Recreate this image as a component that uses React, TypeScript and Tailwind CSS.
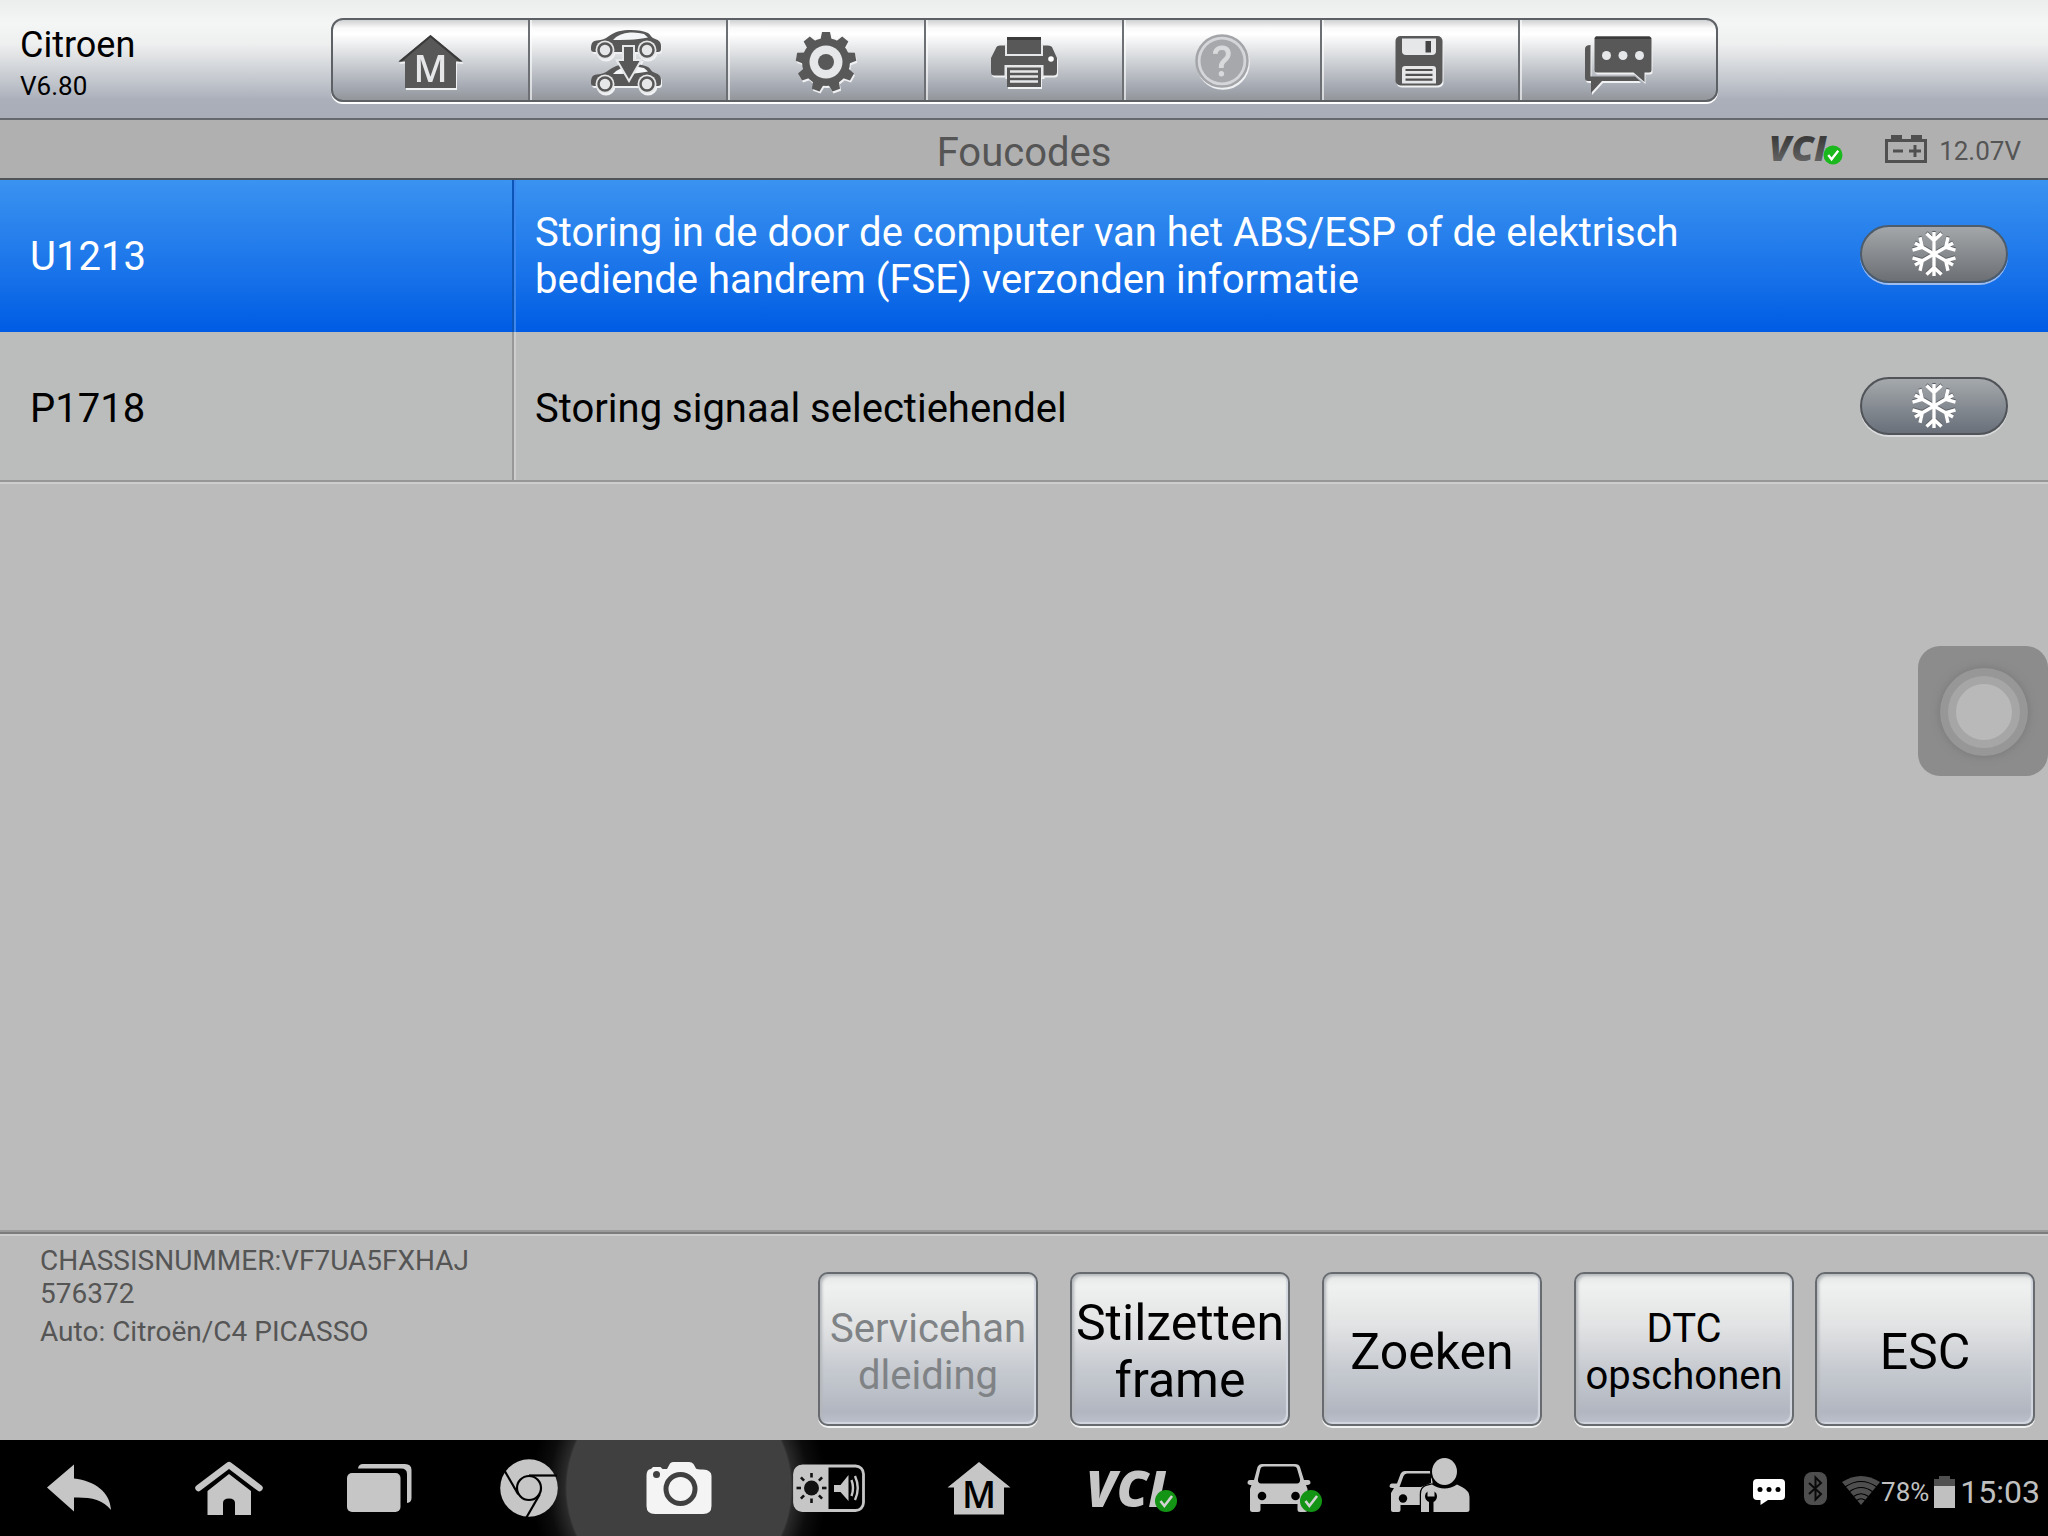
import React from 'react';
import clsx from 'clsx';

interface FaultCode {
  code: string;
  description: string;
  selected?: boolean;
}

interface IconButton {
  label: string;
  icon: React.ReactNode;
  disabled?: boolean;
}

interface FooterAction {
  label: string;
  large?: boolean;
  disabled?: boolean;
}

const faultCodes: FaultCode[] = [
  {
    code: 'U1213',
    description:
      'Storing in de door de computer van het ABS/ESP of de elektrisch bediende handrem (FSE) verzonden informatie',
    selected: true,
  },
  { code: 'P1718', description: 'Storing signaal selectiehendel' },
];

const actions: FooterAction[] = [
  { label: 'Servicehandleiding', disabled: true },
  { label: 'Stilzetten frame', large: true },
  { label: 'Zoeken', large: true },
  { label: 'DTC opschonen' },
];

const DARK = '#585858';
const LIGHT = '#e6e7e9';
const NAV = '#c6c6c6';

/* ---------- toolbar icons ---------- */

const ToolIcon: React.FC<{ children: React.ReactNode }> = ({ children }) => (
  <svg
    viewBox="0 0 80 76"
    className="h-[76px] w-20 shrink-0 drop-shadow-[1px_2px_0_#f0f1f3]"
    fill={DARK}
    aria-hidden="true"
  >
    {children}
  </svg>
);

const HomeMIcon = () => (
  <ToolIcon>
    <path d="M39.5 13 71.5 39.5H65V66H14V39.5H7.5Z" />
    <path d="M39.5 13 71.5 39.5H68L39.5 15.5 11 39.5H7.5Z" fill="#3a3a3a" />
    <text x="39.5" y="60" textAnchor="middle" fontSize="37" fontWeight="600" fill={LIGHT} className="font-['Open_Sans',sans-serif]">
      M
    </text>
  </ToolIcon>
);

const SideCar: React.FC<{ y: number }> = ({ y }) => (
  <g transform={`translate(0 ${y})`}>
    <path d="M3 27C3 22 4 19 9 18.5 14 18 17 17 21 14 27 9.500 34 8 43 8 50 8 56 9 60 11 63 13 63 15 65 16 70 18 73 19 73 24V27Q73 30 70 30H6Q3 30 3 27Z" />
    <path d="M25 18Q31 11 42 10.500 50 10 56 12L60 15.500Q50 18 25 18Z" fill="#f4f5f6" />
    {[17, 59].map((cx) => (
      <g key={cx}>
        <circle cx={cx} cy="28" r="9.500" fill={LIGHT} />
        <circle cx={cx} cy="28" r="6.500" fill={LIGHT} stroke={DARK} strokeWidth="2.500" />
      </g>
    ))}
  </g>
);

const CarSwapIcon = () => (
  <ToolIcon>
    <SideCar y={0} />
    <SideCar y={34} />
    <path
      d="M36 25H45V39H51.500L41 57 30.500 39H36Z"
      stroke={LIGHT}
      strokeWidth="4"
      paintOrder="stroke"
    />
  </ToolIcon>
);

const GearIcon = () => (
  <ToolIcon>
    <g transform="translate(40 40)">
      {Array.from({ length: 9 }, (_, i) => (
        <path key={i} d="M-4-30H4L6-20H-6Z" transform={`rotate(${i * 40})`} />
      ))}
      <circle r="24" />
      <circle r="16.500" fill={LIGHT} />
      <circle r="8" />
    </g>
  </ToolIcon>
);

const PrinterIcon = () => (
  <ToolIcon>
    <path d="M12.500 25Q13 23.500 16 23.500H64Q67 23.500 68 25L73 36V50Q73 53.500 69.500 53.500H10.500Q7 53.500 7 50V36Z" />
    <path d="M21 22V34H59V22" fill={LIGHT} />
    <path d="M23 15H57V32H23Z" />
    <path d="M23 15H57V18H23Z" fill="#3a3a3a" />
    <path d="M20.500 43H59.500V55H20.500Z" fill={LIGHT} />
    <path d="M23 45.500H57V65H23Z" />
    <path d="M26 49.500H54M26 54.500H54M26 59.500H54" stroke={LIGHT} strokeWidth="2.500" />
    <circle cx="67" cy="37" r="2.800" fill="#fff" />
  </ToolIcon>
);

const HelpIcon = () => (
  <ToolIcon>
    <circle cx="40" cy="39" r="25.500" fill="#d4d6d9" stroke="#a3a5a8" strokeWidth="2.500" />
    <circle cx="40" cy="39" r="21.500" fill="#a6a8ab" />
    <text x="40" y="54" textAnchor="middle" fontSize="42" fill="#d8dadc" stroke="#d8dadc" className="font-[Roboto,sans-serif]">
      ?
    </text>
  </ToolIcon>
);

const SaveIcon = () => (
  <ToolIcon>
    <rect x="15.500" y="14" width="47" height="49.500" rx="5" />
    <path d="M22 16.500H56V29Q56 33 52 33H26Q22 33 22 29Z" fill={LIGHT} />
    <path d="M45.500 19H51V30.500H45.500Z" fill="#444" />
    <path d="M22 61.500V47Q22 44 25 44H53Q56 44 56 47V61.500Z" fill={LIGHT} />
    <path d="M25.500 48H52.500M25.500 52.800H52.500M25.500 57.600H52.500" stroke="#505050" strokeWidth="2.200" />
  </ToolIcon>
);

const ChatIcon = () => (
  <ToolIcon>
    <path d="M12.500 23Q7 23 7 27V56Q7 59 10 59H13V71L24 59H62L57 54.500H12.500Z" />
    <path d="M18 14.500H71.500Q73.500 14.500 73.500 17V48Q73.500 50.500 71 50.500H66.500V60L55.500 50.500H19Q16.500 50.500 16.500 48V17Q16.500 14.500 18 14.500Z" />
    <path d="M18 14.500H71.500L73.500 17H16.500Z" fill="#3a3a3a" />
    {[28.5, 45, 61.5].map((cx) => (
      <circle key={cx} cx={cx} cy="33.500" r="4.500" fill={LIGHT} />
    ))}
  </ToolIcon>
);

const tools: IconButton[] = [
  { label: 'Start', icon: <HomeMIcon /> },
  { label: 'Voertuig wisselen', icon: <CarSwapIcon /> },
  { label: 'Instellingen', icon: <GearIcon /> },
  { label: 'Afdrukken', icon: <PrinterIcon /> },
  { label: 'Help', icon: <HelpIcon />, disabled: true },
  { label: 'Opslaan', icon: <SaveIcon /> },
  { label: 'Berichten', icon: <ChatIcon /> },
];

/* ---------- navigation bar icons ---------- */

const NavIcon: React.FC<{ children: React.ReactNode }> = ({ children }) => (
  <svg viewBox="0 0 96 64" className="h-16 w-24 shrink-0 overflow-visible" fill={NAV} aria-hidden="true">
    {children}
  </svg>
);

const CheckBadge: React.FC<{ cx: number; cy: number; r: number; fill: string; tick: string }> = ({
  cx,
  cy,
  r,
  fill,
  tick,
}) => (
  <g transform={`translate(${cx} ${cy}) scale(${r / 10})`}>
    <circle r="10" fill={fill} />
    <path d="M-5 0-1.500 4.500 5.500-4.500" fill="none" stroke={tick} strokeWidth="2.400" />
  </g>
);

const navItems: IconButton[] = [
  {
    label: 'Terug',
    icon: (
      <NavIcon>
        <path d="M16 31.500 43 8.500V22.500C64 25 79 36 80 54 72 43 58 41 43 41.500V55.500Z" />
      </NavIcon>
    ),
  },
  {
    label: 'Startscherm',
    icon: (
      <NavIcon>
        <path d="M17.500 32 48 9 78.500 32" fill="none" stroke={NAV} strokeWidth="6.500" strokeLinecap="round" strokeLinejoin="round" />
        <path d="M48 18 70 35V59H54V47Q54 42.500 48 42.500 42 42.500 42 47V59H26.500V35Z" />
      </NavIcon>
    ),
  },
  {
    label: 'Recente apps',
    icon: (
      <NavIcon>
        <rect x="16" y="17" width="53.500" height="39" rx="5" />
        <path d="M27 12.500Q27.500 8 32 8H74Q80.500 8 80.500 14V42Q80.500 46.500 76 47V18Q76 12.500 70 12.500Z" />
      </NavIcon>
    ),
  },
  {
    label: 'Browser',
    icon: (
      <NavIcon>
        <circle cx="48" cy="32" r="28.800" />
        <g transform="translate(48 32)" fill="none" stroke="#000" strokeWidth="2.200">
          <circle r="12" />
          {[0, 120, 240].map((a) => (
            <path key={a} d="M0-12.500H28" transform={`rotate(${a})`} />
          ))}
        </g>
      </NavIcon>
    ),
  },
  {
    label: 'Camera',
    icon: (
      <NavIcon>
        <path
          fill="#f4f4f4"
          d="M15.500 20Q15.500 13 20 13L22 11H29.500L31.500 13H36L39 7.500Q40 6 42 6H58Q61 6 62.500 8L65 12.500Q66 13.500 72 13.500 80.500 14 80.500 20V50Q80.500 58 72 58H24Q15.500 58 15.500 50Z"
        />
        <circle cx="25.500" cy="18.500" r="3.500" fill="#404040" />
        <circle cx="49.500" cy="33" r="14.500" fill="none" stroke="#404040" strokeWidth="5" />
      </NavIcon>
    ),
  },
  {
    label: 'Helderheid en volume',
    icon: (
      <NavIcon>
        <rect x="13.500" y="10" width="69" height="44.500" rx="8" fill="none" stroke={NAV} strokeWidth="2.800" />
        <path d="M47.500 9H22Q13 9 13 18V47Q13 55.500 22 55.500H47.500Z" />
        <circle cx="30.500" cy="32" r="7.500" fill="#111" />
        {Array.from({ length: 8 }, (_, i) => (
          <path key={i} d="M0-10.500V-15" stroke="#111" strokeWidth="2.600" transform={`translate(30.500 32) rotate(${i * 45})`} />
        ))}
        <path d="M53 29H59.500L67.500 19V45L59.500 36H53Z" />
        <path d="M70.500 24Q73.500 32 70.500 40M74 20Q79.500 32 74 44" fill="none" stroke={NAV} strokeWidth="2.400" />
      </NavIcon>
    ),
  },
  {
    label: 'MaxiSys start',
    icon: (
      <NavIcon>
        <path d="M48 6 79.500 31.500H73V58.500H23V31.500H16.500Z" />
        <text x="48" y="52" textAnchor="middle" fontSize="37" fontWeight="600" fill="#000" className="font-['Open_Sans',sans-serif]">
          M
        </text>
      </NavIcon>
    ),
  },
  {
    label: 'VCI',
    icon: (
      <NavIcon>
        <text x="5" y="51" fontSize="50" fontWeight="800" fontStyle="italic" className="font-['Open_Sans',sans-serif]">
          VCI
        </text>
        <CheckBadge cx={85} cy={45} r={11} fill="#149414" tick="#d4d4d4" />
      </NavIcon>
    ),
  },
  {
    label: 'Voertuig',
    icon: (
      <NavIcon>
        <path
          fillRule="evenodd"
          d="M31 8H64Q68 8 69 11L73 24H77Q79.500 24 79.500 27 79 29 75 29L76.500 33V54Q76.500 56 74 56H69Q66.500 56 66.500 54V48H29.500V54Q29.500 56 27 56H21.500Q19 56 19 54V33L20.500 29Q17 29 16.500 27 16.500 24 19 24H23L26.500 11Q28 8 31 8ZM33 10.500Q30 10.500 29.500 12.500L27 23Q26.500 27 30 27.500H66Q69.500 27 69 23L66 12.500Q65.500 10.500 63 10.500Z"
        />
        <circle cx="31" cy="40" r="4.300" fill="#000" />
        <circle cx="64.500" cy="40" r="4.300" fill="#000" />
        <CheckBadge cx={80} cy={45} r={11} fill="#149414" tick="#d4d4d4" />
      </NavIcon>
    ),
  },
  {
    label: 'Ondersteuning',
    icon: (
      <NavIcon>
        <path
          fillRule="evenodd"
          d="M50 15H24Q21 15 19.500 18L16 27.500H10.500Q8.500 28 8.500 30.500 9 32 13 32L10 37V54Q10 56 12 56H17.500Q19.500 56 19.500 54V49H40L44 34 52 30ZM50 17.500V27L40 31H18.500L22.500 20Q23.500 17.500 26 17.500Z"
        />
        <circle cx="22" cy="42.500" r="4.200" fill="#000" />
        <ellipse cx="63.500" cy="15.500" rx="14.500" ry="15.500" fill="#000" />
        <ellipse cx="63.500" cy="15.500" rx="12.500" ry="13.500" />
        <path
          stroke="#000"
          strokeWidth="2.500"
          paintOrder="stroke"
          d="M40 56V38Q40 32 45 30L51 28.500Q57 32.500 63.500 32.500 70 32.500 76 28.500L81 31Q88.500 35 88.500 41V54Q88.500 56 86 56Z"
        />
        <path d="M48 56V46Q44 44 44 40 44 37 46.500 35.500V40.500H53.500V35.500Q56 37 56 40 56 44 52.500 46V56Z" fill="#000" />
      </NavIcon>
    ),
  },
];

/* ---------- parts ---------- */

const TopBar = () => (
  <header className="flex h-[120px] border-b-2 border-[#65696d] bg-[linear-gradient(#eceeed_0px,#f4f5f5_24px,#eeefef_44px,#c6cad0_78px,#abafba_100px,#a9adb8_118px)]">
    <div className="w-[331px] shrink-0 pt-6 pl-5 text-black">
      <h1 className="text-[36px] leading-[42px]">Citroen</h1>
      <p className="mt-1 text-[26px] leading-8">V6.80</p>
    </div>
    <div
      role="toolbar"
      aria-label="Werkbalk"
      className="mt-[18px] flex h-[84px] overflow-hidden rounded-[12px] border-2 border-[#5d6165] bg-[linear-gradient(#cfd0d2_0px,#fafafa_8px,#ffffff_14px,#d2d5d8_40px,#a6aab3_66px,#93979b_80px)] shadow-[0_2px_0_#ffffff]"
    >
      {tools.map((tool, i) => (
        <button
          key={tool.label}
          type="button"
          aria-label={tool.label}
          disabled={tool.disabled}
          className={clsx(
            'flex items-center justify-center',
            i === 0 ? 'w-[195px]' : 'w-[198px] border-l-2 border-[#6c7074] shadow-[inset_2px_0_0_#ffffff99]'
          )}
        >
          {tool.icon}
        </button>
      ))}
    </div>
  </header>
);

const TitleBar = () => (
  <div className="grid h-[60px] grid-cols-[1fr_auto_1fr] items-center border-b-2 border-[#505358] bg-[#b0b0b0] text-[#555]">
    <h2 className="col-start-2 pt-[6px] text-[40px] leading-[47px]">Foucodes</h2>
    <div className="flex items-center justify-end pr-[27px]">
      <svg viewBox="0 0 80 48" role="img" aria-label="VCI verbonden" className="mr-9 h-12 w-20 overflow-visible">
        <defs>
          <linearGradient id="vci" x1="0" y1="0" x2="0" y2="1">
            <stop offset="0.300" stopColor="#3c3c3c" />
            <stop offset="1" stopColor="#747474" />
          </linearGradient>
        </defs>
        <text x="0" y="36" fontSize="36" fontWeight="800" fontStyle="italic" fill="url(#vci)" className="font-['Open_Sans',sans-serif]">
          VCI
        </text>
        <CheckBadge cx={64} cy={30} r={9.5} fill="#19b81c" tick="#fff" />
      </svg>
      <svg viewBox="0 0 42 28" className="h-7 w-[42px]" aria-hidden="true">
        <path d="M1.500 5.500H40.500V26.500H1.500Z" fill="none" stroke="#505050" strokeWidth="3" />
        <path d="M6 0H17V5H6ZM26 0H37V5H26Z" fill="#505050" />
        <path d="M8 16H18M24 16H36M30 10V22" stroke="#505050" strokeWidth="3" />
      </svg>
      <span className="ml-3 pt-1 text-[26px] leading-8">12.07V</span>
    </div>
  </div>
);

const Snowflake = () => (
  <svg viewBox="-24 -24 48 48" className="size-12 drop-shadow-[0_-1px_0_#5c6064]" aria-hidden="true">
    {[0, 60, 120, 180, 240, 300].map((a) => (
      <path
        key={a}
        d="M0 0V-22M-7.500-20.500 0-13.500 7.500-20.500"
        fill="none"
        stroke="#fff"
        strokeWidth="3.400"
        transform={`rotate(${a})`}
      />
    ))}
  </svg>
);

const CodeTable = () => (
  <table className="w-full table-fixed border-collapse text-[40px] leading-[47px]">
    <colgroup>
      <col className="w-1/4" />
      <col />
      <col className="w-[188px]" />
    </colgroup>
    <tbody>
      {faultCodes.map((row) => (
        <tr
          key={row.code}
          aria-selected={row.selected}
          className={
            row.selected
              ? 'h-[152px] bg-linear-to-b from-[#3a93f0] to-[#005ce4] text-white'
              : 'h-[152px] bg-[#bbbdbc] text-black shadow-[inset_0_-2px_0_#cdcdcd,inset_0_-4px_0_#979797]'
          }
        >
          <th scope="row" className="pl-[30px] text-left font-normal">
            {row.code}
          </th>
          <td
            className={clsx(
              'pr-10 pl-[23px]',
              row.selected
                ? 'shadow-[inset_2px_0_0_#0a56b8,inset_4px_0_0_#3c86ee]'
                : 'shadow-[inset_0_-2px_0_#cdcdcd,inset_0_-4px_0_#979797,inset_2px_0_0_#979797,inset_4px_0_0_#cdcdcd]'
            )}
          >
            {row.description}
          </td>
          <td className="pb-1">
            <button
              type="button"
              aria-label={`Stilzetten frame ${row.code}`}
              className={clsx(
                'flex h-[58px] w-[148px] items-center justify-center rounded-full border-2 bg-linear-to-b',
                row.selected
                  ? 'border-[#4c5c6c] from-[#a4a7aa] to-[#6c7074] shadow-[0_2px_0_#9dbdf0]'
                  : 'border-[#505458] from-[#a5a9ac] to-[#69707a] shadow-[0_2px_0_#d8dadc]'
              )}
            >
              <Snowflake />
            </button>
          </td>
        </tr>
      ))}
    </tbody>
  </table>
);

const ActionButton: React.FC<{ action: FooterAction }> = ({ action }) => (
  <button
    type="button"
    disabled={action.disabled}
    className={clsx(
      'h-[154px] w-[220px] shrink-0 rounded-[10px] border-2 border-[#676b6f] pt-[6px]',
      'bg-[linear-gradient(#e4e6e5_0%,#eff1f0_8%,#e2e3e4_34%,#c6cad0_64%,#b2b6c0_92%,#bcc1cd_100%)] shadow-[0_2px_0_#f0f1f1,inset_2px_2px_3px_#b4b7ba,inset_-2px_-2px_1px_#d3d7e0]',
      'wrap-anywhere text-black disabled:text-[#808386]',
      action.large ? 'text-[50px] leading-[57px]' : 'px-1 text-[40px] leading-[47px]'
    )}
  >
    {action.label}
  </button>
);

const Footer = () => (
  <footer className="flex h-[210px] items-start justify-between border-t-2 border-[#9a9a9a] shadow-[inset_0_2px_0_#7c7c7c,inset_0_4px_0_#cccccc]">
    <div className="w-[480px] pt-3 pl-10 text-[28px] leading-[33px] text-[#555]">
      <p className="break-all">CHASSISNUMMER:VF7UA5FXHAJ576372</p>
      <p className="mt-[5px]">Auto: Citroën/C4 PICASSO</p>
    </div>
    <div className="flex gap-[21px] pt-10 pr-[13px]">
      <div className="flex gap-8">
        {actions.map((action) => (
          <ActionButton key={action.label} action={action} />
        ))}
      </div>
      <ActionButton action={{ label: 'ESC', large: true }} />
    </div>
  </footer>
);

const StatusArea = () => (
  <div className="flex items-center pt-2 pr-2 text-[#c0c0c0]">
    <svg viewBox="0 0 32 26" className="h-[26px] w-8" aria-hidden="true">
      <path d="M4 0H28Q32 0 32 4V17Q32 21 28 21H15L7.500 26V21H4Q0 21 0 17V4Q0 0 4 0Z" fill="#fff" />
      {[7, 16, 25].map((cx) => (
        <circle key={cx} cx={cx} cy="10.500" r="2.500" />
      ))}
    </svg>
    <svg viewBox="0 0 23 33" className="mb-2 ml-[19px] h-[33px] w-[23px]" aria-hidden="true">
      <rect width="23" height="33" rx="8" fill="#4e4e4e" />
      <path d="M5 11 17 22 11.500 27.500V5.500L17 11 5 22" fill="none" stroke="#0a0a0a" strokeWidth="2" />
    </svg>
    <svg viewBox="0 0 38 29" className="mb-1 ml-[15px] h-[29px] w-[38px]" aria-hidden="true">
      <path d="M0 6Q19-6 38 6L19 29Z" fill="#4e4e4e" />
      <path d="M3 11Q19 0 35 11M7 16Q19 7 31 16M11.500 20.500Q19 15 26.500 20.500M14.500 24.500Q19 21 23.500 24.500" fill="none" stroke="#000" strokeWidth="1.200" />
    </svg>
    <span className="ml-px text-[26px] leading-8">78%</span>
    <svg viewBox="0 0 21 32" className="ml-[5px] h-8 w-[21px]" aria-hidden="true">
      <path d="M5 0H16V3H21V10H0V3H5Z" fill="#505050" />
      <path d="M0 10H21V32H0Z" fill="#c0c0c0" />
    </svg>
    <time className="ml-[5px] text-[32px] leading-10">15:03</time>
  </div>
);

const NavBar = () => (
  <nav aria-label="Systeembalk" className="isolate flex h-24 justify-between overflow-hidden bg-black pl-1">
    <div className="flex">
      {navItems.map((item) => (
        <button
          key={item.label}
          type="button"
          aria-label={item.label}
          className="relative flex w-[150px] items-center justify-center"
        >
          {item.label === 'Camera' && (
            <span className="absolute inset-y-0 -inset-x-[75px] -z-10 bg-[radial-gradient(circle,#404040_112px,#2a2a2a_114px,#0c0c0c_130px,transparent_148px)]" />
          )}
          {item.icon}
        </button>
      ))}
    </div>
    <StatusArea />
  </nav>
);

const App: React.FC = () => {
  return (
    <div className="flex min-h-screen flex-col bg-[#bbbbbb] font-[Roboto,'Noto_Sans',sans-serif]">
      <TopBar />
      <TitleBar />
      <main className="flex-1">
        <CodeTable />
      </main>
      <Footer />
      <NavBar />
      {/* floating assist button, docked on the right edge */}
      <button
        type="button"
        aria-label="Snelmenu"
        className="absolute top-[646px] right-0 flex size-[130px] items-center justify-center rounded-[22px] bg-[#8c8c8c] pt-0.5 pl-0.5"
      >
        <span className="flex size-[88px] items-center justify-center rounded-full bg-[#979797] shadow-[0_0_8px_#777]">
          <span className="size-[72px] rounded-full border-8 border-[#a6a6a6] bg-[#b9b9b9]" />
        </span>
      </button>
    </div>
  );
};

export default App;
